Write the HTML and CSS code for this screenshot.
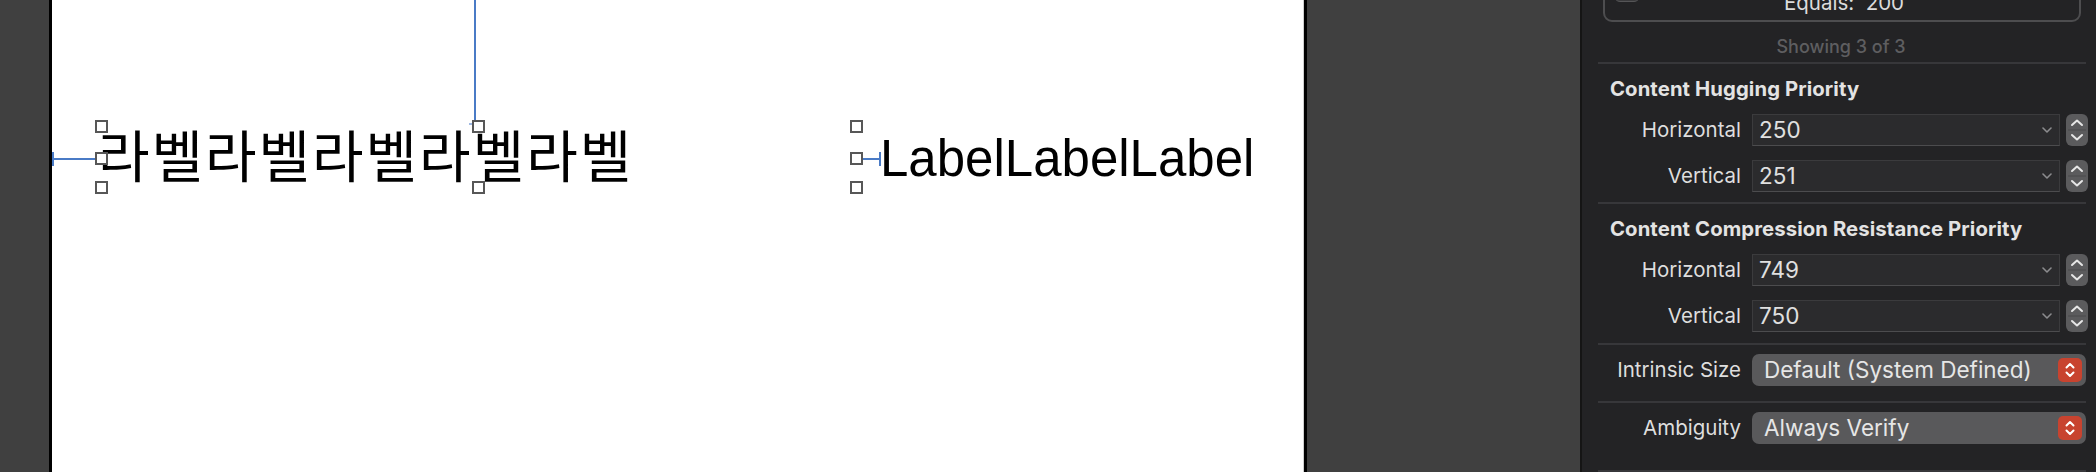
FILE: index.html
```html
<!DOCTYPE html>
<html>
<head>
	<meta charset="utf-8">
	<link rel="stylesheet" href="styles.css">
</head>
<body>
	<div class="gutter"></div>

	<div class="canvas">
		<div class="guide guide-top"></div>
		<div class="guide guide-top-cap"></div>
		<div class="guide guide-lead"></div>
		<div class="guide guide-lead-cap"></div>
		<div class="guide guide-space"></div>
		<div class="guide guide-space-cap"></div>

		<span class="ko-label">라벨라벨라벨라벨라벨</span>
		<span class="en-label">LabelLabelLabel</span>

		<div class="handle h-left h-top"></div>
		<div class="handle h-left h-mid"></div>
		<div class="handle h-left h-bot"></div>
		<div class="handle h-center h-top"></div>
		<div class="handle h-center h-bot"></div>
		<div class="handle h-right h-top"></div>
		<div class="handle h-right h-mid"></div>
		<div class="handle h-right h-bot"></div>
	</div>

	<div class="gutter gutter-mid"></div>

	<div class="inspector">
		<div class="cbox">
			<div class="cbox-check"></div>
			<span class="cbox-text">Equals:  200</span>
		</div>
		<div class="showing">Showing 3 of 3</div>
		<div class="sep"></div>

		<div class="heading">Content Hugging Priority</div>
		<div class="row first">
			<div class="row-label">Horizontal</div>
			<div class="field"><span>250</span>
				<svg width="10" height="6" viewBox="0 0 10 6"><path d="M1 1l4 4 4-4" stroke="#8c8c8e" stroke-width="1.6" fill="none" stroke-linecap="round" stroke-linejoin="round"/></svg>
			</div>
			<div class="stepper">
				<svg width="22" height="32" viewBox="0 0 22 32"><path d="M6 11l5-4.5 5 4.5" stroke="#e6e6e6" stroke-width="2" fill="none" stroke-linecap="round" stroke-linejoin="round"/><line x1="2" y1="16" x2="20" y2="16" stroke="#4a4a4c" stroke-width="1"/><path d="M6 21l5 4.5 5-4.5" stroke="#e6e6e6" stroke-width="2" fill="none" stroke-linecap="round" stroke-linejoin="round"/></svg>
			</div>
		</div>
		<div class="row">
			<div class="row-label">Vertical</div>
			<div class="field"><span>251</span>
				<svg width="10" height="6" viewBox="0 0 10 6"><path d="M1 1l4 4 4-4" stroke="#8c8c8e" stroke-width="1.6" fill="none" stroke-linecap="round" stroke-linejoin="round"/></svg>
			</div>
			<div class="stepper">
				<svg width="22" height="32" viewBox="0 0 22 32"><path d="M6 11l5-4.5 5 4.5" stroke="#e6e6e6" stroke-width="2" fill="none" stroke-linecap="round" stroke-linejoin="round"/><line x1="2" y1="16" x2="20" y2="16" stroke="#4a4a4c" stroke-width="1"/><path d="M6 21l5 4.5 5-4.5" stroke="#e6e6e6" stroke-width="2" fill="none" stroke-linecap="round" stroke-linejoin="round"/></svg>
			</div>
		</div>
		<div class="sep sep-after-rows"></div>

		<div class="heading">Content Compression Resistance Priority</div>
		<div class="row first">
			<div class="row-label">Horizontal</div>
			<div class="field"><span>749</span>
				<svg width="10" height="6" viewBox="0 0 10 6"><path d="M1 1l4 4 4-4" stroke="#8c8c8e" stroke-width="1.6" fill="none" stroke-linecap="round" stroke-linejoin="round"/></svg>
			</div>
			<div class="stepper">
				<svg width="22" height="32" viewBox="0 0 22 32"><path d="M6 11l5-4.5 5 4.5" stroke="#e6e6e6" stroke-width="2" fill="none" stroke-linecap="round" stroke-linejoin="round"/><line x1="2" y1="16" x2="20" y2="16" stroke="#4a4a4c" stroke-width="1"/><path d="M6 21l5 4.5 5-4.5" stroke="#e6e6e6" stroke-width="2" fill="none" stroke-linecap="round" stroke-linejoin="round"/></svg>
			</div>
		</div>
		<div class="row">
			<div class="row-label">Vertical</div>
			<div class="field"><span>750</span>
				<svg width="10" height="6" viewBox="0 0 10 6"><path d="M1 1l4 4 4-4" stroke="#8c8c8e" stroke-width="1.6" fill="none" stroke-linecap="round" stroke-linejoin="round"/></svg>
			</div>
			<div class="stepper">
				<svg width="22" height="32" viewBox="0 0 22 32"><path d="M6 11l5-4.5 5 4.5" stroke="#e6e6e6" stroke-width="2" fill="none" stroke-linecap="round" stroke-linejoin="round"/><line x1="2" y1="16" x2="20" y2="16" stroke="#4a4a4c" stroke-width="1"/><path d="M6 21l5 4.5 5-4.5" stroke="#e6e6e6" stroke-width="2" fill="none" stroke-linecap="round" stroke-linejoin="round"/></svg>
			</div>
		</div>
		<div class="sep sep-short"></div>

		<div class="row popup-row">
			<div class="row-label">Intrinsic Size</div>
			<div class="popup"><span>Default (System Defined)</span>
				<div class="popup-btn">
					<svg width="24" height="24" viewBox="0 0 24 24"><path d="M8.5 9.5L12 6l3.5 3.5M8.5 14.5L12 18l3.5-3.5" stroke="#fff" stroke-width="2" fill="none" stroke-linecap="round" stroke-linejoin="round"/></svg>
				</div>
			</div>
		</div>
		<div class="sep sep-mid"></div>

		<div class="row popup-row">
			<div class="row-label">Ambiguity</div>
			<div class="popup"><span>Always Verify</span>
				<div class="popup-btn">
					<svg width="24" height="24" viewBox="0 0 24 24"><path d="M8.5 9.5L12 6l3.5 3.5M8.5 14.5L12 18l3.5-3.5" stroke="#fff" stroke-width="2" fill="none" stroke-linecap="round" stroke-linejoin="round"/></svg>
				</div>
			</div>
		</div>
		<div class="sep sep-last"></div>
	</div>
</body>
</html>
```

FILE: styles.css
```css
body
{
	margin:0;
	display:flex;
	height:472px;
	overflow:hidden;
	background:#404040;
	font-family:Inter, "Noto Sans", sans-serif;
}

/* dark areas around the canvas */
.gutter
{
	flex:none;
	width:49px;
	background:#404040;
}
.gutter-mid
{
	flex:1;
	width:auto;
}

/* interface builder canvas */
.canvas
{
	flex:none;
	position:relative;
	width:1252px;
	background:#ffffff;
	border-left:3px solid #000;
	border-right:3px solid #000;
	box-shadow:inset -1px 0 #cfcfcf;
}

.guide
{
	position:absolute;
	background:#4a7bc6;
}
.guide-top { left:422px; top:0px; width:2px; height:124px; }
.guide-top-cap { left:417px; top:123px; width:16px; height:2px; background:#9fb8e2; }
.guide-lead { left:0px; top:158px; width:43px; height:2px; }
.guide-lead-cap { left:0px; top:152px; width:2px; height:14px; }
.guide-space { left:806px; top:158px; width:22px; height:2px; }
.guide-space-cap { left:827px; top:152px; width:2px; height:14px; }

.ko-label
{
	position:absolute;
	left:46px;
	top:125px;
	font-family:"Noto Sans CJK KR", sans-serif;
	font-size:56px;
	letter-spacing:2px;
	line-height:1;
	color:#000;
	white-space:nowrap;
}
.en-label
{
	position:absolute;
	left:828px;
	top:133px;
	font-family:"Liberation Sans", Arial, sans-serif;
	font-size:51px;
	line-height:1;
	color:#000;
	white-space:nowrap;
}

.handle
{
	position:absolute;
	width:13px;
	height:13px;
	box-sizing:border-box;
	border:2px solid #575757;
	background:#fff;
}
.h-left { left:43px; }
.h-center { left:420px; }
.h-right { left:798px; }
.h-top { top:120px; }
.h-mid { top:152px; }
.h-bot { top:181px; }

/* inspector panel */
.inspector
{
	flex:none;
	width:516px;
	box-sizing:border-box;
	border-left:2px solid #151515;
	background:#232325;
	color:#dedede;
	display:flex;
	flex-direction:column;
	font-size:20.5px;
}

.cbox
{
	flex:none;
	position:relative;
	margin:-40px 0 0 21px;
	width:478px;
	height:62px;
	box-sizing:border-box;
	border:2px solid #4d4d4f;
	border-radius:9px;
	display:flex;
	align-items:flex-end;
	justify-content:center;
	padding-bottom:5px;
}
.cbox-check
{
	position:absolute;
	left:9px;
	bottom:18px;
	width:26px;
	height:26px;
	box-sizing:border-box;
	border:1px solid #555557;
	border-radius:6px;
	background:#3a3a3c;
}
.cbox-text
{
	line-height:24px;
	white-space:pre;
	color:#dcdcdc;
	padding-left:4px;
}

.showing
{
	flex:none;
	height:40px;
	box-sizing:border-box;
	padding:13px 0 0 4px;
	line-height:24px;
	font-size:18px;
	font-weight:500;
	text-align:center;
	color:#5e5e60;
}

.sep
{
	flex:none;
	height:2px;
	width:488px;
	margin-left:16px;
	background:#37373a;
}
.sep-after-rows { margin-top:10px; }
.sep-short { margin-top:11px; }
.sep-mid { margin-top:15px; }
.sep-last { margin-top:26px; }

.heading
{
	flex:none;
	margin-top:13px;
	padding-left:28px;
	line-height:24px;
	font-size:20.3px;
	font-weight:700;
	letter-spacing:0.1px;
	color:#e3e3e3;
	white-space:nowrap;
}

.row
{
	flex:none;
	display:flex;
	align-items:center;
	height:32px;
	margin-top:14px;
}
.row.first { margin-top:13px; }
.row.popup-row { margin-top:9px; }

.row-label
{
	width:159px;
	margin-right:11px;
	text-align:right;
	line-height:32px;
	white-space:nowrap;
}

.field
{
	width:308px;
	height:32px;
	box-sizing:border-box;
	background:#2b2b2d;
	border:1px solid #3b3b3d;
	border-bottom-color:#4c4c4e;
	display:flex;
	align-items:center;
	justify-content:space-between;
	padding:0 7px 0 6px;
	line-height:30px;
	font-size:22.5px;
	color:#e0e0e0;
}
.field svg { display:block; }

.stepper
{
	margin-left:6px;
	width:22px;
	height:32px;
	border-radius:6px;
	background:#5b5b5d;
}
.stepper svg { display:block; }

.popup
{
	width:334px;
	height:32px;
	box-sizing:border-box;
	border-radius:7px;
	background:#59595b;
	display:flex;
	align-items:center;
	justify-content:space-between;
	padding:0 4px 0 12px;
	color:#e6e6e6;
	line-height:32px;
	font-size:22.5px;
}
.popup-btn
{
	width:24px;
	height:24px;
	border-radius:5px;
	background:#c8432f;
}
.popup-btn svg { display:block; }
```
